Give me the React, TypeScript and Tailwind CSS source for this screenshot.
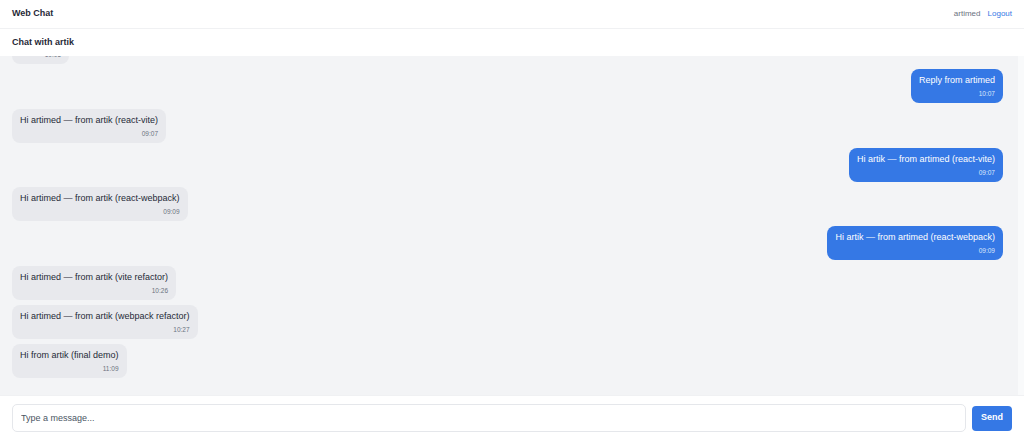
import { useLayoutEffect, useRef } from "react";

type Message = {
    id: number;
    text: string;
    time: string;
    mine: boolean;
};

const messages: Message[] = [
    { id: 1, text: "Hi artimed", time: "10:05", mine: false },
    { id: 2, text: "Reply from artimed", time: "10:07", mine: true },
    { id: 3, text: "Hi artimed — from artik (react-vite)", time: "09:07", mine: false },
    { id: 4, text: "Hi artik — from artimed (react-vite)", time: "09:07", mine: true },
    { id: 5, text: "Hi artimed — from artik (react-webpack)", time: "09:09", mine: false },
    { id: 6, text: "Hi artik — from artimed (react-webpack)", time: "09:09", mine: true },
    { id: 7, text: "Hi artimed — from artik (vite refactor)", time: "10:26", mine: false },
    { id: 8, text: "Hi artimed — from artik (webpack refactor)", time: "10:27", mine: false },
    { id: 9, text: "Hi from artik (final demo)", time: "11:09", mine: false },
];

const Bubble = ({ msg }: { msg: Message }) => {
    return (
        <div className={msg.mine ? "flex justify-end" : "flex justify-start"}>
            <div
                className={
                    msg.mine
                        ? "rounded-[8px] bg-[#3578e5] px-[8px] pt-[5px] pb-[4px] text-white"
                        : "rounded-[8px] bg-[#e8e9ed] px-[8px] pt-[5px] pb-[4px] text-[#1f2937]"
                }
            >
                <div className="text-[9px] leading-[13px]">{msg.text}</div>
                <div
                    className={
                        msg.mine
                            ? "mt-[2px] text-right text-[6.5px] leading-[10px] text-[#dbe7fb]"
                            : "mt-[2px] text-right text-[6.5px] leading-[10px] text-[#6b7280]"
                    }
                >
                    {msg.time}
                </div>
            </div>
        </div>
    );
};

const App = () => {
    const listRef = useRef<HTMLDivElement>(null);

    useLayoutEffect(() => {
        if (listRef.current) {
            listRef.current.scrollTop = listRef.current.scrollHeight;
        }
    }, []);

    return (
        <div
            className="flex h-screen flex-col bg-white text-[#111827]"
            style={{ fontFamily: '"Liberation Sans", Arial, sans-serif' }}
        >
            {/* Top bar */}
            <header className="flex h-[29px] shrink-0 items-center justify-between border-b border-[#f0f1f3] px-[12px]">
                <span className="text-[9px] font-semibold text-[#1f2937]">Web Chat</span>
                <div className="flex items-center gap-[7px] text-[8px]">
                    <span className="text-[#6b7280]">artimed</span>
                    <button className="text-[#3578e5]">Logout</button>
                </div>
            </header>

            {/* Chat title */}
            <div className="flex h-[27px] shrink-0 items-center px-[12px]">
                <span className="text-[9px] font-semibold text-[#1f2937]">Chat with artik</span>
            </div>

            {/* Messages */}
            <div
                ref={listRef}
                className="flex flex-1 flex-col gap-[5.3px] overflow-y-auto border-r-[6px] border-r-[#f9fafb] bg-[#f3f4f6] pt-[12px] pr-[15px] pb-[17px] pl-[12px] [scrollbar-width:none]"
            >
                {messages.map((m) => (
                    <Bubble key={m.id} msg={m} />
                ))}
            </div>

            {/* Composer */}
            <div className="flex h-[45px] shrink-0 items-center gap-[6px] border-t border-[#f0f1f3] px-[12px]">
                <input
                    className="h-[28px] flex-1 rounded-[5px] border border-[#e5e7eb] px-[8px] text-[9px] outline-none placeholder:text-[#4b5563]"
                    placeholder="Type a message..."
                />
                <button className="h-[25px] w-[40px] rounded-[4px] bg-[#3578e5] text-[9px] font-semibold text-white">
                    Send
                </button>
            </div>
        </div>
    );
};

export default App;
